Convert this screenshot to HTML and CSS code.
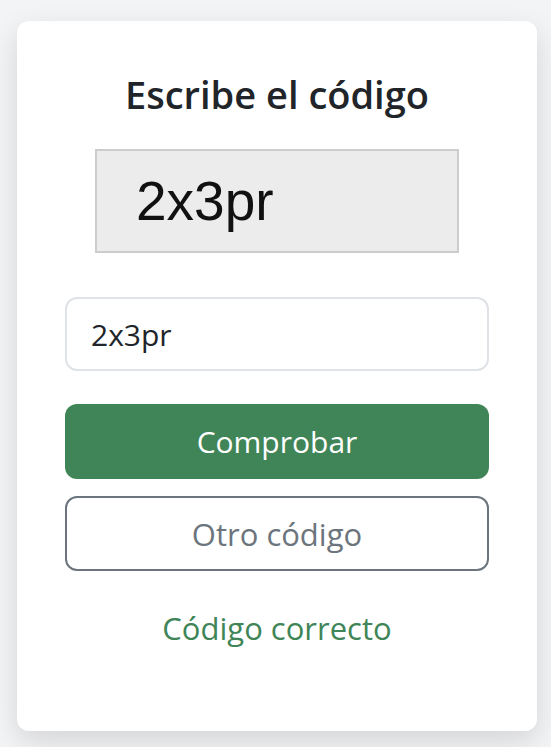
FILE: index.html
```html
<!DOCTYPE html>
<html lang="es">
<head>
<meta charset="utf-8">
<title>Captcha</title>
<link rel="stylesheet" href="styles.css">
</head>
<body>
<main class="card">
  <h1 class="title">Escribe el código</h1>
  <div class="captcha"><span class="captcha-text">2x3pr</span></div>
  <input class="code-input" type="text" value="2x3pr">
  <button class="btn btn-primary" type="button">Comprobar</button>
  <button class="btn btn-outline" type="button">Otro código</button>
  <p class="status">Código correcto</p>
</main>
</body>
</html>
```

FILE: styles.css
```css
html, body {
  margin: 0;
  padding: 0;
  background: #f3f4f6;
}
body {
  padding: 21px 14px 16px 17px;
  font-family: "Open Sans", "Noto Sans", sans-serif;
  color: #212529;
}
.card {
  box-sizing: border-box;
  width: 520px;
  height: 710px;
  background: #fff;
  border-radius: 12px;
  box-shadow: 0 10px 28px rgba(0, 0, 0, 0.13);
  padding: 49px 48px 0 48px;
  display: flex;
  flex-direction: column;
  align-items: stretch;
}
.title {
  margin: 0;
  font-size: 38px;
  font-weight: 600;
  line-height: 48px;
  text-align: center;
  color: #212529;
}
.captcha {
  box-sizing: border-box;
  align-self: center;
  width: 364px;
  height: 104px;
  margin-top: 31px;
  background: #ececec;
  border: 2px solid #cccccc;
  padding-left: 39px;
  display: flex;
  align-items: center;
}
.captcha-text {
  font-family: "Liberation Sans", Arial, sans-serif;
  font-size: 55px;
  line-height: 100px;
  color: #111;
}
.code-input {
  box-sizing: border-box;
  margin: 44px 0 0 0;
  height: 74px;
  width: 100%;
  border: 2px solid #dfe2e6;
  border-radius: 12px;
  padding: 0 24px;
  font-family: "Open Sans", "Noto Sans", sans-serif;
  font-size: 30px;
  color: #212529;
  background: #fff;
  outline: none;
}
.btn {
  box-sizing: border-box;
  width: 100%;
  height: 75px;
  border-radius: 12px;
  font-family: "Open Sans", "Noto Sans", sans-serif;
  font-size: 30px;
  cursor: pointer;
  padding: 0;
}
.btn-primary {
  margin-top: 33px;
  background: #408558;
  border: none;
  color: #fff;
}
.btn-outline {
  margin-top: 17px;
  background: #fff;
  border: 2px solid #6c757d;
  color: #6c757d;
  font-size: 31px;
}
.status {
  margin: 37px 0 0 0;
  font-size: 31px;
  line-height: 41px;
  text-align: center;
  color: #408558;
}
```
